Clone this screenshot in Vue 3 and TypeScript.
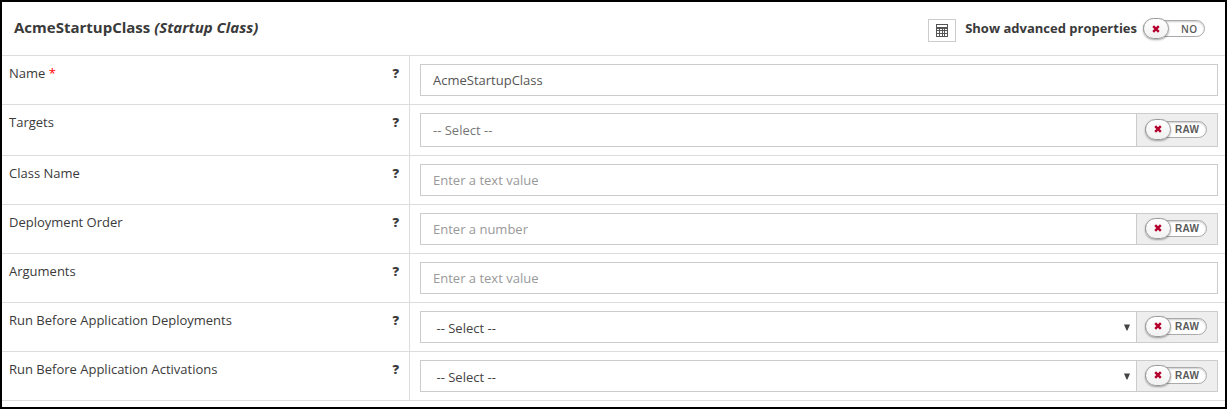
<script setup lang="ts">
interface Field {
  label: string
  required?: boolean
  kind: 'text' | 'picker' | 'select'
  text: string
  filled?: boolean
  raw?: boolean
}

const fields: Field[] = [
  { label: 'Name', required: true, kind: 'text', text: 'AcmeStartupClass', filled: true },
  { label: 'Targets', kind: 'picker', text: '-- Select --', raw: true },
  { label: 'Class Name', kind: 'text', text: 'Enter a text value' },
  { label: 'Deployment Order', kind: 'text', text: 'Enter a number', raw: true },
  { label: 'Arguments', kind: 'text', text: 'Enter a text value' },
  { label: 'Run Before Application Deployments', kind: 'select', text: '-- Select --', raw: true },
  { label: 'Run Before Application Activations', kind: 'select', text: '-- Select --', raw: true },
]
</script>

<template>
  <main class="panel">
    <header class="head">
      <h1 class="title">AcmeStartupClass <em>(Startup Class)</em></h1>
      <button class="calc" aria-label="Calculator">
        <svg width="12" height="13" viewBox="0 0 12 13" shape-rendering="crispEdges">
          <path fill="#555" fill-rule="evenodd" d="M0 0H12V13H0ZM1 1V3H11V1ZM1 5V6H3V5ZM4 5V6H6V5ZM7 5V6H8V5ZM9 5V6H11V5ZM1 7V9H3V7ZM4 7V9H6V7ZM7 7V9H8V7ZM9 7V9H11V7ZM1 10V12H3V10ZM4 10V12H6V10ZM7 10V12H8V10ZM9 10V12H11V10Z" />
        </svg>
      </button>
      <span class="advanced">Show advanced properties</span>
      <span class="toggle no">
        <span class="knob"><svg width="8" height="8" viewBox="0 0 8 8"><path d="M1.2 1.2 6.8 6.8M6.8 1.2 1.2 6.8" stroke="#b3002d" stroke-width="2.4" /></svg></span>
        <span class="state">NO</span>
      </span>
    </header>
    <section v-for="field in fields" :key="field.label" class="row" :class="field.kind">
      <div class="label">
        <span>{{ field.label }} <span v-if="field.required" class="star">*</span></span>
        <b class="help">?</b>
      </div>
      <div class="value">
        <div class="control">
          <div class="entry" :class="{ filled: field.filled }">
            <span>{{ field.text }}</span>
            <svg v-if="field.kind === 'select'" class="arrow" width="6" height="7" viewBox="0 0 6 7"><path d="M0 .5H6L3.4 6.5H2.6Z" fill="#444" /></svg>
          </div>
          <div v-if="field.raw" class="addon">
            <span class="toggle">
              <span class="knob"><svg width="8" height="8" viewBox="0 0 8 8"><path d="M1.2 1.2 6.8 6.8M6.8 1.2 1.2 6.8" stroke="#b3002d" stroke-width="2.4" /></svg></span>
              <span class="state">RAW</span>
            </span>
          </div>
        </div>
      </div>
    </section>
  </main>
</template>

<style>
body {
  margin: 0;
  background: #fff;
}
</style>

<style scoped>
* {
  box-sizing: border-box;
}
.panel {
  width: 1227px;
  height: 409px;
  border: 2px solid #000;
  background: #fff;
  color: #3a3a3a;
  font: 13px/18px "Open Sans", sans-serif;
  overflow: hidden;
}
.head {
  display: flex;
  align-items: center;
  height: 53px;
  padding: 0 20px 0 12px;
}
.title {
  flex: 1;
  margin: 0 0 4px;
  font-size: 15px;
  font-weight: 700;
  line-height: 20px;
}
.calc {
  display: flex;
  align-items: center;
  justify-content: center;
  width: 28px;
  height: 23px;
  margin: 3px 9px 0 0;
  padding: 0 1px 0 0;
  border: 1px solid #ccc;
  background: #fff;
}
.advanced {
  margin: 0 6px 2px 0;
  font-size: 13px;
  font-weight: 700;
}
.row {
  display: flex;
  height: 49px;
  border-top: 1px solid #ddd;
}
.row.picker {
  height: 51px;
}
.row:last-child {
  height: 50px;
  border-bottom: 1px solid #ddd;
}
.label {
  display: flex;
  justify-content: space-between;
  width: 408px;
  padding: 8px 10px 0 7px;
  border-right: 1px solid #ddd;
}
.star {
  color: #f00;
}
.help {
  font-weight: 800;
}
.value {
  flex: 1;
  padding: 8px 7px 0 10px;
}
.control {
  display: flex;
  height: 32px;
  border: 1px solid #ccc;
}
.picker .control {
  height: 34px;
}
.entry {
  display: flex;
  flex: 1;
  align-items: center;
  justify-content: space-between;
  padding: 0 6px 0 12px;
  color: #999;
}
.entry.filled {
  color: #555;
}
.picker .entry {
  color: #777;
}
.select .entry {
  padding: 2px 6px 0 15.5px;
  color: #444;
}
.arrow {
  margin-top: -2px;
}
.addon {
  display: flex;
  align-items: center;
  width: 81px;
  padding: 0 0 2px 8px;
  border-left: 1px solid #ccc;
  background: #eee;
}
.toggle {
  display: flex;
  align-items: center;
  width: 62px;
  height: 17px;
  border: 1px solid #aaa;
  border-radius: 9px;
  background: #fff;
  box-shadow: inset 0 1px 2px #ccc;
}
.knob {
  display: flex;
  align-items: center;
  justify-content: center;
  width: 26px;
  height: 21px;
  flex: none;
  margin-left: -1px;
  border: 1px solid #999;
  border-radius: 11px;
  background: linear-gradient(#fff, #f1f1f1);
  box-shadow: 0 1px 2px rgba(0, 0, 0, 0.35);
}
.state {
  flex: 1;
  padding-left: 4px;
  color: #5a5a5a;
  font: bold 10px/15px "Liberation Sans", sans-serif;
  letter-spacing: 0.3px;
}
.no .state {
  padding: 1px 0 0 12px;
  font: 600 10px/15px "Open Sans", sans-serif;
}
</style>
